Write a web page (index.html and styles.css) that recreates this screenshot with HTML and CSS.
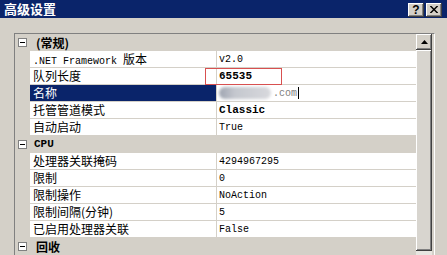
FILE: index.html
```html
<!DOCTYPE html>
<html lang="zh-CN">
<head>
  <meta charset="UTF-8">
  <meta name="viewport" content="width=device-width, initial-scale=1.0">
  <title>高级设置</title>
  <link rel="stylesheet" href="styles.css">
</head>
<body>

<div class="titlebar">
  <span class="title">高级设置</span>
  <div class="title-buttons">
    <span class="tbtn help">?</span>
    <span class="tbtn">
      <svg width="8" height="7" viewBox="0 0 8 7"><path d="M0 0 L1.5 0 L4 2.5 L6.5 0 L8 0 L8 0.5 L5 3.5 L8 6.5 L8 7 L6.5 7 L4 4.5 L1.5 7 L0 7 L0 6.5 L3 3.5 L0 0.5 Z" fill="#000"/></svg>
    </span>
  </div>
</div>

<div class="main">
  <div class="grid">
    <div class="rows">
      <div class="cat"><span class="toggle"></span><span class="cat-name">(常规)</span></div>
      <div class="prop">
        <span class="gutter"></span>
        <span class="label"><span class="lat">.NET Framework </span>版本</span>
        <span class="value">v2.0</span>
      </div>
      <div class="prop">
        <span class="gutter"></span>
        <span class="label">队列长度</span>
        <span class="value bold">65535</span>
      </div>
      <div class="prop selected">
        <span class="gutter"></span>
        <span class="label">名称</span>
        <span class="value"><span class="blurred"></span><span class="faded">.com</span><span class="caret"></span></span>
      </div>
      <div class="prop">
        <span class="gutter"></span>
        <span class="label">托管管道模式</span>
        <span class="value bold">Classic</span>
      </div>
      <div class="prop">
        <span class="gutter"></span>
        <span class="label">自动启动</span>
        <span class="value">True</span>
      </div>
      <div class="cat"><span class="toggle"></span><span class="cat-name lat-bold">CPU</span></div>
      <div class="prop">
        <span class="gutter"></span>
        <span class="label">处理器关联掩码</span>
        <span class="value">4294967295</span>
      </div>
      <div class="prop">
        <span class="gutter"></span>
        <span class="label">限制</span>
        <span class="value">0</span>
      </div>
      <div class="prop">
        <span class="gutter"></span>
        <span class="label">限制操作</span>
        <span class="value">NoAction</span>
      </div>
      <div class="prop">
        <span class="gutter"></span>
        <span class="label">限制间隔(分钟)</span>
        <span class="value">5</span>
      </div>
      <div class="prop">
        <span class="gutter"></span>
        <span class="label">已启用处理器关联</span>
        <span class="value">False</span>
      </div>
      <div class="cat"><span class="toggle"></span><span class="cat-name">回收</span></div>
    </div>

    <div class="scrollbar">
      <div class="sb-up">
        <svg width="7" height="4" viewBox="0 0 7 4"><path d="M3.5 0 L7 4 L0 4 Z" fill="#000"/></svg>
      </div>
      <div class="sb-thumb"></div>
    </div>

    <div class="mark"></div>
  </div>
</div>

</body>
</html>
```

FILE: styles.css
```css
body {
  margin: 0;
  background-color: #d4d0c8;
  font-family: "Noto Sans CJK SC", "Liberation Sans", sans-serif;
  font-size: 12px;
  overflow: hidden;
}

.titlebar {
  height: 18px;
  background-color: #0a246a;
  display: flex;
  align-items: center;
  justify-content: space-between;
  padding: 0 5px 0 4px;
}

.title {
  color: #fff;
  font-weight: bold;
  font-size: 13px;
  line-height: 18px;
}

.title-buttons {
  display: flex;
  gap: 2px;
  padding-top: 1px;
}

.tbtn {
  width: 16px;
  height: 14px;
  box-sizing: border-box;
  background-color: #d4d0c8;
  box-shadow: inset -1px -1px #404040, inset 1px 1px #fff, inset -2px -2px #808080;
  display: flex;
  align-items: center;
  justify-content: center;
}

.tbtn.help {
  font-family: "Liberation Sans", sans-serif;
  font-weight: bold;
  font-size: 12px;
  line-height: 14px;
}

.main {
  padding: 15px 0 0 14px;
}

.grid {
  position: relative;
  display: flex;
  width: 419px;
  border-top: 1px solid #808080;
  border-left: 1px solid #808080;
  border-right: 1px solid #fff;
}

.rows {
  width: 401px;
}

.cat {
  height: 17px;
  display: flex;
  align-items: center;
  background-color: #d4d0c8;
}

.toggle {
  width: 9px;
  height: 9px;
  box-sizing: border-box;
  margin: 0 9px 0 3px;
  border: 1px solid #808080;
  background-color: #fff;
  position: relative;
}

.toggle::after {
  content: "";
  position: absolute;
  left: 1px;
  top: 3px;
  width: 5px;
  height: 1px;
  background-color: #000;
}

.cat-name {
  font-weight: bold;
  line-height: 17px;
}

.lat-bold {
  font-family: "Liberation Mono", monospace;
  font-size: 11px;
  margin-left: -2px;
}

.prop {
  height: 17px;
  display: grid;
  grid-template-columns: 15px 186px 200px;
}

.gutter {
  background-color: #d4d0c8;
}

.label,
.value {
  box-sizing: border-box;
  height: 17px;
  background-color: #fff;
  border-bottom: 1px solid #d4d0c8;
  white-space: pre;
  overflow: hidden;
}

.label {
  display: block;
  padding-left: 3px;
  line-height: 16px;
  color: #000;
}

.lat {
  font-family: "Liberation Mono", monospace;
  font-size: 10px;
}

.value {
  display: flex;
  align-items: center;
  border-left: 1px solid #d4d0c8;
  padding-left: 2px;
  font-family: "Liberation Mono", monospace;
  font-size: 10px;
}

.value.bold {
  font-weight: bold;
  font-size: 11px;
}

.selected .label {
  background-color: #0a246a;
  color: #fff;
}

.blurred {
  display: inline-block;
  width: 52px;
  height: 12px;
  border-radius: 6px;
  background: linear-gradient(90deg, #9ea4b0, #c4c7ce 30%, #d8d9dd);
  filter: blur(1.5px);
}

.faded {
  color: #808080;
  margin-left: 2px;
}

.caret {
  display: inline-block;
  width: 1px;
  height: 12px;
  background-color: #000;
  margin-left: 1px;
}

.scrollbar {
  width: 16px;
  display: flex;
  flex-direction: column;
  background-color: #e8e6e1;
}

.sb-up {
  height: 16px;
  box-sizing: border-box;
  background-color: #d4d0c8;
  box-shadow: inset -1px -1px #404040, inset 1px 1px #fff, inset -2px -2px #808080;
  display: flex;
  align-items: center;
  justify-content: center;
}

.sb-thumb {
  height: 201px;
  background-color: #d8d5cf;
  box-shadow: inset -1px -1px #404040, inset 1px 1px #fff, inset -2px -2px #808080;
}

.mark {
  position: absolute;
  left: 190px;
  top: 34px;
  width: 77px;
  height: 17px;
  box-sizing: border-box;
  border: 1px solid #d85050;
}
```
